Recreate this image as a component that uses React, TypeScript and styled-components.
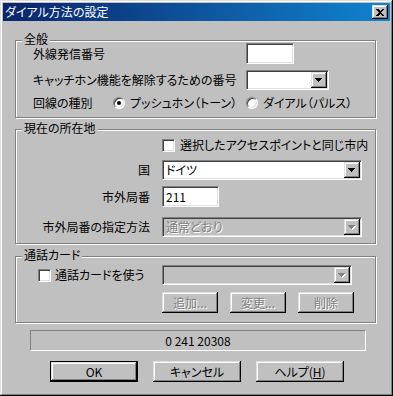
import React from 'react';
import styled, { createGlobalStyle } from 'styled-components';

const GlobalStyle = createGlobalStyle`
  html, body {
    margin: 0;
    padding: 0;
    background: #c0c0c0;
  }
  body {
    font-family: "Noto Sans CJK JP", "Noto Sans", sans-serif;
    font-size: 12px;
  }
`;

// classic 3D edges
const raised = `
  box-shadow: inset -1px -1px #000, inset 1px 1px #dfdfdf,
    inset -2px -2px #808080, inset 2px 2px #fff;
`;
const sunken = `
  border: 1px solid;
  border-color: #808080 #fff #fff #808080;
  box-shadow: inset 1px 1px #404040, inset -1px -1px #dfdfdf;
`;
const disabledText = `
  color: #808080;
  text-shadow: 1px 1px 0 #fff;
`;

const Window = styled.div`
  width: 393px;
  height: 396px;
  box-sizing: border-box;
  padding: 3px;
  background: #c0c0c0;
  color: #000;
  display: flex;
  flex-direction: column;
  font-feature-settings: "palt";
  box-shadow: inset -1px -1px #000, inset 1px 1px #dfdfdf,
    inset -2px -2px #808080, inset 2px 2px #fff;
`;

const TitleBar = styled.div`
  height: 18px;
  display: flex;
  align-items: center;
  padding: 0 2px;
  background: linear-gradient(to right, #0a246a, #1084d0);
`;

const TitleText = styled.span`
  color: #fff;
  font-size: 12px;
  line-height: 18px;
`;

const CloseButton = styled.div`
  margin-left: auto;
  width: 16px;
  height: 14px;
  background: #c0c0c0;
  display: flex;
  align-items: center;
  justify-content: center;
  ${raised}
`;

const Body = styled.div`
  display: flex;
  flex-direction: column;
  padding-left: 12px;
`;

const Group = styled.div<{ $h: number; $mt: number }>`
  position: relative;
  width: 361px;
  height: ${p => p.$h}px;
  margin-top: ${p => p.$mt}px;
  box-sizing: border-box;
  border: 1px solid #808080;
  box-shadow: inset 1px 1px #fff, 1px 1px #fff;
`;

const Legend = styled.span`
  position: absolute;
  top: -9px;
  left: 6px;
  padding: 0 2px;
  line-height: 14px;
  background: #c0c0c0;
`;

const Rows = styled.div<{ $pt: number; $pl?: number }>`
  display: flex;
  flex-direction: column;
  padding: ${p => p.$pt}px 0 0 ${p => p.$pl ?? 0}px;
`;

const Row = styled.div<{ $h: number; $mt?: number }>`
  display: flex;
  align-items: center;
  height: ${p => p.$h}px;
  margin-top: ${p => p.$mt ?? 0}px;
`;

const Label = styled.span<{ $w: number; $right?: boolean }>`
  width: ${p => p.$w}px;
  flex: none;
  line-height: 14px;
  white-space: nowrap;
  text-align: ${p => (p.$right ? 'right' : 'left')};
`;

const Cell = styled.div<{ $w: number; $pl?: number }>`
  width: ${p => p.$w}px;
  flex: none;
  display: flex;
  align-items: center;
  box-sizing: border-box;
  padding-left: ${p => p.$pl ?? 0}px;
`;

const Edit = styled.div<{ $w: number; $h: number }>`
  width: ${p => p.$w}px;
  height: ${p => p.$h}px;
  box-sizing: border-box;
  background: #fff;
  padding: 0 3px;
  display: flex;
  align-items: center;
  line-height: 14px;
  ${sunken}
`;

const Combo = styled.div<{ $w: number; $disabled?: boolean }>`
  width: ${p => p.$w}px;
  height: 20px;
  box-sizing: border-box;
  padding: 1px;
  display: flex;
  background: ${p => (p.$disabled ? '#c0c0c0' : '#fff')};
  ${sunken}
`;

const ComboText = styled.span<{ $disabled?: boolean }>`
  flex: 1;
  display: flex;
  align-items: center;
  padding-left: 2px;
  line-height: 14px;
  ${p => (p.$disabled ? disabledText : '')}
`;

const DropButton = styled.div`
  width: 16px;
  height: 16px;
  flex: none;
  background: #c0c0c0;
  display: flex;
  align-items: center;
  justify-content: center;
  ${raised}
`;

const RadioOption = styled.label<{ $w?: number }>`
  display: flex;
  align-items: center;
  gap: 5px;
  width: ${p => (p.$w ? `${p.$w}px` : 'auto')};
  line-height: 14px;
  white-space: nowrap;
`;

const RadioDot = styled.span<{ $on?: boolean }>`
  position: relative;
  width: 12px;
  height: 12px;
  box-sizing: border-box;
  border-radius: 50%;
  background: #fff;
  border: 1px solid;
  border-color: #808080 #fff #fff #808080;
  box-shadow: inset 1px 1px #404040, inset -1px -1px #dfdfdf;
  &::after {
    content: '';
    display: ${p => (p.$on ? 'block' : 'none')};
    position: absolute;
    left: 3px;
    top: 3px;
    width: 4px;
    height: 4px;
    border-radius: 50%;
    background: #000;
  }
`;

const CheckOption = styled.label<{ $gap: number }>`
  display: flex;
  align-items: center;
  gap: ${p => p.$gap}px;
  line-height: 14px;
  white-space: nowrap;
`;

const CheckBox = styled.span`
  width: 13px;
  height: 13px;
  box-sizing: border-box;
  background: #fff;
  ${sunken}
`;

const ButtonRow = styled.div<{ $gap: number; $pl?: number }>`
  display: flex;
  gap: ${p => p.$gap}px;
  padding-left: ${p => p.$pl ?? 0}px;
`;

const Button = styled.div<{ $w: number; $h: number; $disabled?: boolean; $default?: boolean }>`
  width: ${p => p.$w}px;
  height: ${p => p.$h}px;
  box-sizing: border-box;
  display: flex;
  align-items: center;
  justify-content: center;
  background: #c0c0c0;
  line-height: 14px;
  border: ${p => (p.$default ? '1px solid #000' : 'none')};
  ${raised}
  ${p => (p.$disabled ? disabledText : '')}
`;

const Status = styled.div`
  width: 336px;
  height: 21px;
  margin: 7px 0 0 15px;
  box-sizing: border-box;
  display: flex;
  align-items: center;
  justify-content: center;
  line-height: 14px;
  border: 1px solid;
  border-color: #808080 #fff #fff #808080;
`;

const Footer = styled.div`
  display: flex;
  gap: 15px;
  margin: 10px 0 0 35px;
`;

const Arrow = ({ disabled }: { disabled?: boolean }) => (
  <svg width="8" height="5" viewBox="0 0 8 5" shapeRendering="crispEdges">
    {disabled && <path d="M1 1h7L4.5 5z" fill="#fff" />}
    <path d="M0 0h7L3.5 4z" fill={disabled ? '#808080' : '#000'} />
  </svg>
);

function ComboBox({ width, value, disabled }: { width: number; value?: string; disabled?: boolean }) {
  return (
    <Combo $w={width} $disabled={disabled}>
      <ComboText $disabled={disabled}>{value}</ComboText>
      <DropButton>
        <Arrow disabled={disabled} />
      </DropButton>
    </Combo>
  );
}

export default function App() {
  return (
    <>
      <GlobalStyle />
      <Window>
        <TitleBar>
          <TitleText>ダイアル方法の設定</TitleText>
          <CloseButton>
            <svg width="8" height="7" viewBox="0 0 8 7" shapeRendering="crispEdges">
              <path d="M0 0h2l2 2 2-2h2L5 3.5 8 7H6L4 5 2 7H0l3-3.5z" fill="#000" />
            </svg>
          </CloseButton>
        </TitleBar>

        <Body>
          <Group $h={78} $mt={19}>
            <Legend>全般</Legend>
            <Rows $pt={2} $pl={17}>
              <Row $h={21}>
                <Label $w={213}>外線発信番号</Label>
                <Edit $w={48} $h={21} />
              </Row>
              <Row $h={20} $mt={6}>
                <Label $w={213}>キャッチホン機能を解除するための番号</Label>
                <ComboBox width={83} />
              </Row>
              <Row $h={16} $mt={5}>
                <Label $w={80}>回線の種別</Label>
                <RadioOption $w={133}>
                  <RadioDot $on />
                  プッシュホン（トーン）
                </RadioOption>
                <RadioOption>
                  <RadioDot />
                  ダイアル（パルス）
                </RadioOption>
              </Row>
            </Rows>
          </Group>

          <Group $h={115} $mt={11}>
            <Legend>現在の所在地</Legend>
            <Rows $pt={7}>
              <Row $h={16}>
                <Cell $w={146} />
                <CheckOption $gap={5}>
                  <CheckBox />
                  選択したアクセスポイントと同じ市内
                </CheckOption>
              </Row>
              <Row $h={20} $mt={7}>
                <Label $w={134} $right>国</Label>
                <Cell $w={12} />
                <ComboBox width={200} value="ドイツ" />
              </Row>
              <Row $h={21} $mt={6}>
                <Label $w={134} $right>市外局番</Label>
                <Cell $w={12} />
                <Edit $w={57} $h={21}>211</Edit>
              </Row>
              <Row $h={20} $mt={10}>
                <Label $w={134} $right>市外局番の指定方法</Label>
                <Cell $w={12} />
                <ComboBox width={200} value="通常どおり" disabled />
              </Row>
            </Rows>
          </Group>

          <Group $h={67} $mt={12}>
            <Legend>通話カード</Legend>
            <Rows $pt={8}>
              <Row $h={20}>
                <Cell $w={146} $pl={22}>
                  <CheckOption $gap={4}>
                    <CheckBox />
                    通話カードを使う
                  </CheckOption>
                </Cell>
                <ComboBox width={190} disabled />
              </Row>
              <Row $h={21} $mt={7}>
                <Cell $w={146} />
                <ButtonRow $gap={12}>
                  <Button $w={56} $h={21} $disabled>追加...</Button>
                  <Button $w={56} $h={21} $disabled>変更...</Button>
                  <Button $w={56} $h={21} $disabled>削除</Button>
                </ButtonRow>
              </Row>
            </Rows>
          </Group>

          <Status>0 241 20308</Status>

          <Footer>
            <Button $w={88} $h={21} $default>OK</Button>
            <Button $w={88} $h={21}>キャンセル</Button>
            <Button $w={88} $h={21}>
              ヘルプ(<u>H</u>)
            </Button>
          </Footer>
        </Body>
      </Window>
    </>
  );
}
